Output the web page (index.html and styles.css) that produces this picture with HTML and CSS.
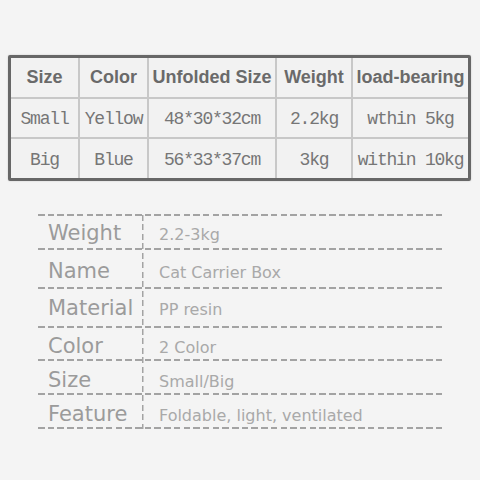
FILE: index.html
```html
<!DOCTYPE html>
<html>
<head>
<meta charset="utf-8">
<link rel="stylesheet" href="styles.css">
</head>
<body>
<div class="page">
  <div class="table">
    <div class="cell head">Size</div>
    <div class="cell head">Color</div>
    <div class="cell head">Unfolded Size</div>
    <div class="cell head">Weight</div>
    <div class="cell head">load-bearing</div>
    <div class="cell">Small</div>
    <div class="cell">Yellow</div>
    <div class="cell">48*30*32cm</div>
    <div class="cell">2.2kg</div>
    <div class="cell">wthin 5kg</div>
    <div class="cell">Big</div>
    <div class="cell">Blue</div>
    <div class="cell">56*33*37cm</div>
    <div class="cell">3kg</div>
    <div class="cell">within 10kg</div>
  </div>

  <div class="spec">
    <div class="row"><span class="label">Weight</span><span class="value">2.2-3kg</span></div>
    <div class="row"><span class="label">Name</span><span class="value">Cat Carrier Box</span></div>
    <div class="row"><span class="label">Material</span><span class="value">PP resin</span></div>
    <div class="row"><span class="label">Color</span><span class="value">2 Color</span></div>
    <div class="row"><span class="label">Size</span><span class="value">Small/Big</span></div>
    <div class="row"><span class="label">Feature</span><span class="value">Foldable, light, ventilated</span></div>
  </div>
</div>
</body>
</html>
```

FILE: styles.css
```css
html, body {
  margin: 0;
  padding: 0;
  background: #f4f4f4;
}

.page {
  width: 480px;
  height: 480px;
  box-sizing: border-box;
  padding: 55px 9px 0 8px;
}

.table {
  display: grid;
  grid-template-columns: 67px 67px 126px 74px 115px;
  grid-template-rows: 39px 38px 39px;
  gap: 2px;
  background: #c8c8c8;
  border: 3px solid #676767;
  border-radius: 2px;
  width: 457px;
  box-shadow: 0 0 2px rgba(0, 0, 0, 0.18);
}

.cell {
  background: #f2f2f2;
  display: flex;
  align-items: center;
  justify-content: center;
  padding-top: 2px;
  box-sizing: border-box;
  font-family: "Liberation Mono", monospace;
  font-size: 18px;
  letter-spacing: -1.2px;
  color: #767676;
  white-space: nowrap;
}

.cell.head {
  padding-top: 0;
  font-family: "Liberation Sans", Arial, sans-serif;
  font-weight: bold;
  font-size: 18px;
  letter-spacing: 0;
  color: #6a6a6a;
}

.spec {
  margin: 33px 0 0 30px;
  width: 404px;
  padding-bottom: 2px;
  background:
    repeating-linear-gradient(to bottom, #a3a3a3 0 6px, transparent 6px 9.5px) 104px 1px / 1.5px 100% no-repeat,
    repeating-linear-gradient(to right, #a3a3a3 0 6.5px, transparent 6.5px 9.7px) 0 100% / 100% 2px no-repeat;
}

.row {
  display: flex;
  align-items: baseline;
  box-sizing: border-box;
  height: 34px;
  padding-top: 9px;
  background: repeating-linear-gradient(to right, #a3a3a3 0 6.5px, transparent 6.5px 9.7px) 0 0 / 100% 2px no-repeat;
}

.row:nth-child(1) { height: 34px; padding-top: 7px; }
.row:nth-child(2) { height: 39px; padding-top: 11px; }
.row:nth-child(3) { height: 39px; padding-top: 9px; }
.row:nth-child(4) { height: 33px; padding-top: 8px; }

.label {
  width: 104px;
  box-sizing: border-box;
  padding-left: 10px;
  font-family: "DejaVu Sans", Verdana, sans-serif;
  font-size: 21px;
  line-height: 24px;
  color: #9b9b9b;
  white-space: nowrap;
}

.value {
  padding-left: 17px;
  font-family: "DejaVu Sans", Verdana, sans-serif;
  font-size: 16px;
  line-height: 20px;
  color: #a9a9a9;
  white-space: nowrap;
}
```
